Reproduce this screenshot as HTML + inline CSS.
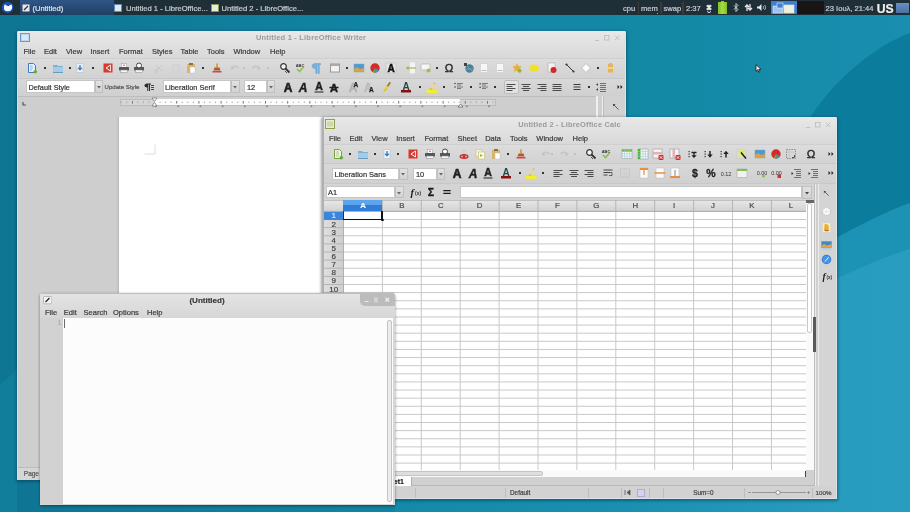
<!DOCTYPE html><html><head><meta charset="utf-8"><style>
*{box-sizing:border-box;margin:0;padding:0}
html,body{width:910px;height:512px;overflow:hidden}
body{position:relative;font-family:"Liberation Sans",sans-serif;background:#15789a}
.a{position:absolute}
.t{white-space:nowrap;-webkit-text-stroke:0.2px currentColor}
.win{position:absolute;overflow:hidden}
#root{position:absolute;left:0;top:0;width:910px;height:512px;will-change:transform;filter:blur(0.35px)}
</style></head><body><div id="root">
<svg class="a" style="left:0;top:0" width="910" height="512" viewBox="0 0 910 512">
<defs>
<linearGradient id="g1" x1="0" y1="0" x2="1" y2="0">
<stop offset="0" stop-color="#0e7593"/><stop offset="0.45" stop-color="#1285a4"/><stop offset="0.75" stop-color="#1489a6"/><stop offset="1" stop-color="#198eaf"/>
</linearGradient>
<linearGradient id="g2" gradientUnits="userSpaceOnUse" x1="395" y1="0" x2="910" y2="0">
<stop offset="0" stop-color="#138aa8"/><stop offset="0.45" stop-color="#1a90b1"/><stop offset="0.85" stop-color="#279cbe"/><stop offset="1" stop-color="#289dbf"/>
</linearGradient>
</defs>
<rect width="910" height="512" fill="url(#g1)"/>
<path d="M910 33 C885 42 857 62 831 90 C800 125 760 200 700 300 L836 238 C860 225 890 210 910 203 Z" fill="#0c7c9c"/>
<path d="M836 238 C860 225 890 210 910 203 L910 249 C880 258 860 268 836 279 Z" fill="#1c93b5"/>
<path d="M910 249 C880 258 860 268 836 279 L700 330 L395 420 L395 512 L910 512 Z" fill="url(#g2)"/>

<path d="M17 369 C12 374 6 380 0 384 L0 512 L17 512 Z" fill="#117e9c"/>
</svg>
<div id="panel" class="win" style="left:0px;top:0px;width:910px;height:15.3px;background:#1e2f38;"><svg class="a" style="left:1px;top:1px" width="14" height="14" viewBox="0 0 14 14"><circle cx="6.6" cy="6.5" r="5.8" fill="#1c4fb8"/><path d="M3 5L4 3.2 5.8 4.8 7 4.8 7.5 3.6 8.5 4.5 10.5 3.2 11 5C11.5 7 11 10 7 10.3 4 10.5 2.8 9 3 7Z" fill="#f4f8ff"/><circle cx="7.4" cy="4.2" r=".7" fill="#10204a"/></svg>
<div class="a" style="left:20px;top:0px;width:94px;height:15px;background:linear-gradient(#2e5686,#203f63);"></div>
<svg class="a" style="left:22px;top:3.5px" width="8" height="8" viewBox="0 0 8 8"><rect x=".5" y=".5" width="7" height="7" fill="#e8e8e8"/><path d="M2 6l4-4" stroke="#333" stroke-width="1.2"/></svg>
<div class="a t" style="left:32.5px;top:2.7px;height:12px;line-height:12px;font-size:7.6px;color:#dfe6ee;font-weight:normal;">(Untitled)</div>
<svg class="a" style="left:113.5px;top:3.5px" width="8" height="8" viewBox="0 0 8 8"><rect x=".5" y=".5" width="7" height="7" fill="#dfe8f4" stroke="#5a8ac8" stroke-width=".8"/></svg>
<div class="a t" style="left:126px;top:2.7px;height:12px;line-height:12px;font-size:7.6px;color:#c9ced3;font-weight:normal;">Untitled 1 - LibreOffice...</div>
<svg class="a" style="left:211px;top:3.5px" width="8" height="8" viewBox="0 0 8 8"><rect x=".5" y=".5" width="7" height="7" fill="#e9eed8" stroke="#8ca050" stroke-width=".8"/></svg>
<div class="a t" style="left:221.5px;top:2.7px;height:12px;line-height:12px;font-size:7.6px;color:#c9ced3;font-weight:normal;">Untitled 2 - LibreOffice...</div>
<div class="a t" style="left:623px;top:2.7px;height:12px;line-height:12px;font-size:7.6px;color:#c9ced3;font-weight:normal;">cpu</div>
<div class="a" style="left:637.5px;top:1.5px;width:1.5px;height:12.5px;background:#3e3a36;"></div>
<div class="a t" style="left:641px;top:2.7px;height:12px;line-height:12px;font-size:7.6px;color:#c9ced3;font-weight:normal;">mem</div>
<div class="a" style="left:660px;top:1.5px;width:1.5px;height:12.5px;background:#3e3a36;"></div>
<div class="a" style="left:656.5px;top:12.5px;width:1.5px;height:1.5px;background:#d8a040;"></div>
<div class="a t" style="left:663.5px;top:2.7px;height:12px;line-height:12px;font-size:7.6px;color:#c9ced3;font-weight:normal;">swap</div>
<div class="a" style="left:682px;top:1.5px;width:1.5px;height:12.5px;background:#3e3a36;"></div>
<div class="a t" style="left:686px;top:2.7px;height:12px;line-height:12px;font-size:7.6px;color:#c9ced3;font-weight:normal;">2:37</div>
<svg class="a" style="left:704px;top:2.5px" width="10" height="10" viewBox="0 0 10 10"><path d="M2 3l2-1.5 1 1 1-1 2 1.5-2 1.5 2 1.5-2 1.5-1-1-1 1-2-1.5 2-1.5z" fill="#e8e8e8"/><path d="M3 8.5l2 1.2 2-1.2" stroke="#ddd" fill="none"/></svg>
<div class="a" style="left:718px;top:1.5px;width:8.5px;height:12.5px;background:linear-gradient(90deg,#7ec02a,#a6dc40,#7ec02a);"></div>
<div class="a" style="left:720.5px;top:0.5px;width:3.5px;height:1.3px;background:#8cc830;"></div>
<svg class="a" style="left:732.5px;top:3px" width="6" height="9" viewBox="0 0 6 9"><path d="M1 2.5l4 4-2 2V.5l2 2-4 4" stroke="#ddd" stroke-width=".9" fill="none"/></svg>
<svg class="a" style="left:743.5px;top:3px" width="9" height="9" viewBox="0 0 9 9"><path d="M3 8V2M1 4l2-2 2 2M6 1v6M4 5l2 2 2-2" stroke="#e8e8e8" stroke-width="1.3" fill="none"/></svg>
<svg class="a" style="left:755.5px;top:3px" width="10" height="9" viewBox="0 0 10 9"><path d="M1 3.5h2l2.5-2.5v7L3 5.5H1z" fill="#e8e8e8"/><path d="M7 3c.8 1 .8 2 0 3M8.5 2c1.4 1.5 1.4 3.5 0 5" stroke="#ddd" stroke-width=".8" fill="none"/></svg>
<div class="a" style="left:771px;top:1px;width:26px;height:13px;background:#3f7fd0;"></div>
<svg class="a" style="left:771px;top:1px" width="26" height="13" viewBox="0 0 26 13"><rect x="2" y="5" width="10" height="7" fill="#9cc4f0" stroke="#e0ecf8" stroke-width=".6"/><rect x="6" y="2" width="6" height="5" fill="#3f7fd0" stroke="#e0ecf8" stroke-width=".6"/><rect x="13" y="4" width="10" height="8" fill="#eef0d8" stroke="#d8e0f0" stroke-width=".6"/></svg>
<div class="a" style="left:797px;top:1px;width:27px;height:13px;background:#1a1515;"></div>
<div class="a t" style="left:825.5px;top:2.7px;height:12px;line-height:12px;font-size:7.6px;color:#c9ced3;font-weight:normal;">23 Ιουλ, 21:44</div>
<div class="a t" style="left:876.8px;top:2.6px;height:12px;line-height:12px;font-size:12.2px;color:#f0f0f0;font-weight:bold;">US</div>
<div class="a" style="left:896px;top:3px;width:13px;height:10px;background:linear-gradient(#6a90c0,#4a70a8);"></div></div>
<div id="writer" class="win" style="left:17px;top:31px;width:609px;height:449px;background:#cdcdcd;box-shadow:0 1px 3px 1px rgba(0,30,50,.35);border-radius:2px 2px 0 0;"><div class="a" style="left:0px;top:0px;width:609px;height:27px;background:linear-gradient(#e8e8e8,#d9d9d9);"></div>
<div class="a" style="left:0px;top:27px;width:609px;height:19.5px;background:linear-gradient(#dcdcdc,#d2d2d2);border-top:1px solid #cfcfcf;"></div>
<div class="a" style="left:0px;top:46.5px;width:609px;height:18.8px;background:linear-gradient(#d8d8d8,#d0d0d0);border-top:1px solid #c8c8c8;"></div>
<div class="a" style="left:0px;top:65.3px;width:609px;height:370.7px;background:#cecece;border-top:1px solid #bdbdbd;"></div>
<div class="a" style="left:0px;top:436px;width:609px;height:13px;background:#d6d6d6;border-top:1px solid #bcbcbc;"></div>
<svg class="a" style="left:3px;top:2px" width="10" height="9" viewBox="0 0 10 9"><rect x=".5" y=".5" width="9" height="8" fill="#bcd6f0" stroke="#6a9ad0" stroke-width="1"/><rect x="2" y="2" width="6" height="5" fill="#dbe9f7"/></svg>
<div class="a t" style="left:194px;width:200px;text-align:center;top:0.8px;height:12px;line-height:12px;font-size:7.5px;color:#9a9a9a;font-weight:bold;-webkit-text-stroke:0;letter-spacing:.2px;">Untitled 1 - LibreOffice Writer</div>
<svg class="a" style="left:576px;top:3px" width="30" height="8" viewBox="0 0 30 8"><path d="M2 6.5h4" stroke="#c2c2c2" stroke-width="1"/><rect x="11.5" y="1.5" width="4.5" height="4.5" fill="none" stroke="#c2c2c2" stroke-width="1"/><path d="M22 1.5l4.5 4.5M26.5 1.5L22 6" stroke="#c2c2c2" stroke-width="1"/></svg>
<div class="a t" style="left:6.5px;top:14.8px;height:12px;line-height:12px;font-size:7.5px;color:#3c3c3c;font-weight:normal;">File</div>
<div class="a t" style="left:27px;top:14.8px;height:12px;line-height:12px;font-size:7.5px;color:#3c3c3c;font-weight:normal;">Edit</div>
<div class="a t" style="left:49px;top:14.8px;height:12px;line-height:12px;font-size:7.5px;color:#3c3c3c;font-weight:normal;">View</div>
<div class="a t" style="left:73.5px;top:14.8px;height:12px;line-height:12px;font-size:7.5px;color:#3c3c3c;font-weight:normal;">Insert</div>
<div class="a t" style="left:102px;top:14.8px;height:12px;line-height:12px;font-size:7.5px;color:#3c3c3c;font-weight:normal;">Format</div>
<div class="a t" style="left:135px;top:14.8px;height:12px;line-height:12px;font-size:7.5px;color:#3c3c3c;font-weight:normal;">Styles</div>
<div class="a t" style="left:163.5px;top:14.8px;height:12px;line-height:12px;font-size:7.5px;color:#3c3c3c;font-weight:normal;">Table</div>
<div class="a t" style="left:190px;top:14.8px;height:12px;line-height:12px;font-size:7.5px;color:#3c3c3c;font-weight:normal;">Tools</div>
<div class="a t" style="left:216.5px;top:14.8px;height:12px;line-height:12px;font-size:7.5px;color:#3c3c3c;font-weight:normal;">Window</div>
<div class="a t" style="left:253px;top:14.8px;height:12px;line-height:12px;font-size:7.5px;color:#3c3c3c;font-weight:normal;">Help</div>
<svg class="a" style="left:9px;top:31px" width="12" height="12" viewBox="0 0 12 12"><path d="M2.5 1.5h5l2 2v7h-7z" fill="#e8f1fa" stroke="#3d7cc0" stroke-width="1"/><path d="M4 4h2.5M4 6h3M4 8h2" stroke="#7aa6d6" stroke-width=".8"/><circle cx="9.3" cy="9.8" r="1.8" fill="#5fae3a"/></svg>
<svg class="a" style="left:34.5px;top:31px" width="12" height="12" viewBox="0 0 12 12"><path d="M1 3h4l1 1h5v6.5H1z" fill="#7fb0d6"/><path d="M1 5h10v5.5H1z" fill="#a6cbe8"/><path d="M1 10.5h10" stroke="#5a8fb8" stroke-width=".8"/></svg>
<svg class="a" style="left:57.4px;top:31px" width="12" height="12" viewBox="0 0 12 12"><path d="M3 1.5h6v9H3z" fill="#f4f6f8" stroke="#b8c4d0" stroke-width=".7"/><path d="M6 3v4.5M4.2 5.8L6 7.8l1.8-2" stroke="#3a7cc4" stroke-width="1.4" fill="none"/></svg>
<svg class="a" style="left:85.2px;top:31px" width="12" height="12" viewBox="0 0 12 12"><rect x="1.5" y="1.5" width="9" height="9" fill="#d8382e"/><path d="M8.5 3L4 6l4.5 3" stroke="#fff" stroke-width="1" fill="none"/><path d="M8.5 3v6" stroke="#fff" stroke-width=".8"/></svg>
<svg class="a" style="left:101px;top:31px" width="12" height="12" viewBox="0 0 12 12"><rect x="3.5" y="1.5" width="5" height="4" fill="#fff" stroke="#999" stroke-width=".5"/><rect x="1" y="5" width="10" height="3.5" rx=".5" fill="#555"/><rect x="2.5" y="8" width="7" height="2.5" fill="#f4f4f4" stroke="#888" stroke-width=".5"/><circle cx="6" cy="3.2" r=".8" fill="#d33"/></svg>
<svg class="a" style="left:115.5px;top:31px" width="12" height="12" viewBox="0 0 12 12"><rect x="1" y="5" width="10" height="3.5" rx=".5" fill="#555"/><rect x="2.5" y="8" width="7" height="2.5" fill="#f4f4f4" stroke="#888" stroke-width=".5"/><circle cx="6" cy="3.5" r="2.5" fill="#fff" stroke="#444" stroke-width="1"/></svg>
<svg class="a" style="left:136px;top:31px" width="12" height="12" viewBox="0 0 12 12"><path d="M3 9l6-6M9 9L3 3" stroke="#c8c8c8" stroke-width="1"/><circle cx="3" cy="9" r="1.5" fill="none" stroke="#c8c8c8"/></svg>
<svg class="a" style="left:151.7px;top:31px" width="12" height="12" viewBox="0 0 12 12"><rect x="4" y="3" width="6" height="7" fill="#d6d6d6" stroke="#cacaca" stroke-width=".6"/></svg>
<svg class="a" style="left:167.5px;top:31px" width="12" height="12" viewBox="0 0 12 12"><rect x="2" y="2" width="8" height="9" rx=".5" fill="#d9b46a"/><rect x="4" y="1" width="4" height="2" fill="#8c6f3a"/><rect x="5" y="5" width="5" height="6" fill="#fff" stroke="#bbb" stroke-width=".5"/></svg>
<svg class="a" style="left:194px;top:31px" width="12" height="12" viewBox="0 0 12 12"><path d="M5 1.5h2v4H5z" fill="#d9a050"/><path d="M3.5 5.5h5l1 3h-7z" fill="#b55a30"/><path d="M1.5 9h9v1.5h-9z" fill="#d64545"/></svg>
<svg class="a" style="left:211.5px;top:31px" width="12" height="12" viewBox="0 0 12 12"><path d="M2.5 7 C3.5 4 7 3 9.5 6" stroke="#c4c4c4" stroke-width="1.5" fill="none"/><path d="M1.5 4.5l1.2 3.5 3-1.5" fill="#c4c4c4"/></svg>
<svg class="a" style="left:233px;top:31px" width="12" height="12" viewBox="0 0 12 12"><path d="M9.5 7 C8.5 4 5 3 2.5 6" stroke="#c4c4c4" stroke-width="1.5" fill="none"/><path d="M10.5 4.5l-1.2 3.5-3-1.5" fill="#c4c4c4"/></svg>
<svg class="a" style="left:262.3px;top:31px" width="12" height="12" viewBox="0 0 12 12"><circle cx="4.5" cy="4.5" r="2.8" fill="#f4f4f4" stroke="#333" stroke-width="1.2"/><path d="M6.5 6.5l4 4" stroke="#333" stroke-width="1.8"/><path d="M6 9l2 2" stroke="#555" stroke-width="1"/></svg>
<svg class="a" style="left:276.8px;top:31px" width="12" height="12" viewBox="0 0 12 12"><text x="6" y="4.5" font-size="4" font-family="Liberation Sans" font-weight="bold" text-anchor="middle" fill="#333">ABC</text><path d="M3 7l2.5 2.5L9.5 5" stroke="#8cc04a" stroke-width="1.6" fill="none"/></svg>
<svg class="a" style="left:292.5px;top:31px" width="12" height="12" viewBox="0 0 12 12"><path d="M5 1.5h5.5v1.3H9.3v8.7H8V2.8H7v8.7H5.8V6.8C3.5 6.8 2 5.6 2 4.1S3.5 1.5 5 1.5z" fill="#78b0e0" stroke="#5a94c8" stroke-width=".4"/></svg>
<svg class="a" style="left:311.8px;top:31px" width="12" height="12" viewBox="0 0 12 12"><rect x="1.5" y="2" width="9" height="8" fill="#f2f2f2" stroke="#888" stroke-width=".8"/><rect x="1.5" y="2" width="9" height="2" fill="#aaa"/></svg>
<svg class="a" style="left:336px;top:31px" width="12" height="12" viewBox="0 0 12 12"><rect x="1" y="2" width="10" height="8" fill="#4a9ad8"/><path d="M1 7l3-2 3 2 4-1v4H1z" fill="#e0a040"/><rect x="1" y="2" width="10" height="8" fill="none" stroke="#8aa" stroke-width=".5"/></svg>
<svg class="a" style="left:351.7px;top:31px" width="12" height="12" viewBox="0 0 12 12"><circle cx="6" cy="6" r="4.7" fill="#d92828"/><path d="M6 6l4.2 2.2A4.7 4.7 0 0 1 7 10.6z" fill="#3c8fd0"/><path d="M6 6l1 4.6A4.7 4.7 0 0 1 3.5 10z" fill="#5ab046"/></svg>
<svg class="a" style="left:367.5px;top:31px" width="12" height="12" viewBox="0 0 12 12"><rect x="1" y="1" width="10" height="10" fill="#e4e4e4" stroke="#c0c0c0" stroke-width=".6"/><text x="6" y="10" font-size="10" font-family="Liberation Sans" font-weight="bold" text-anchor="middle" fill="#111" stroke="#111" stroke-width=".5">A</text></svg>
<svg class="a" style="left:388px;top:31px" width="12" height="12" viewBox="0 0 12 12"><rect x="5" y="0.5" width="5" height="11" fill="#f4f4f4"/><path d="M1 6h10" stroke="#b8c070" stroke-width="1.5"/><path d="M1.5 6l2-1.8v3.6z" fill="#8cb040"/></svg>
<svg class="a" style="left:402.8px;top:31px" width="12" height="12" viewBox="0 0 12 12"><rect x="1" y="2" width="9" height="6" rx="1" fill="#f6f6f6" stroke="#aaa" stroke-width=".6"/><circle cx="8.5" cy="8.5" r="2" fill="#9cc050"/></svg>
<svg class="a" style="left:425.8px;top:31px" width="12" height="12" viewBox="0 0 12 12"><text x="6" y="10.3" font-size="11.5" font-family="Liberation Sans" text-anchor="middle" fill="#222" stroke="#222" stroke-width=".35">&#937;</text></svg>
<svg class="a" style="left:445.5px;top:31px" width="12" height="12" viewBox="0 0 12 12"><circle cx="6.5" cy="6.5" r="4.2" fill="#4a7f95"/><path d="M4 4l5 5M3 7h7" stroke="#7fb0c4" stroke-width=".7"/><rect x="1" y="1" width="3" height="3" fill="#444"/></svg>
<svg class="a" style="left:460.5px;top:31px" width="12" height="12" viewBox="0 0 12 12"><rect x="2.5" y="1.5" width="7" height="9" fill="#f6f6f6" stroke="#ccc" stroke-width=".6"/><path d="M3.5 8.5h5" stroke="#999" stroke-width=".6"/></svg>
<svg class="a" style="left:476.6px;top:31px" width="12" height="12" viewBox="0 0 12 12"><rect x="2.5" y="1.5" width="7" height="9" fill="#f6f6f6" stroke="#ccc" stroke-width=".6"/><path d="M3.5 8.5h5" stroke="#999" stroke-width=".6"/></svg>
<svg class="a" style="left:494px;top:31px" width="12" height="12" viewBox="0 0 12 12"><path d="M6 1l1.5 3 3.3.4-2.4 2.3.6 3.3L6 8.4 3 10l.6-3.3L1.2 4.4l3.3-.4z" fill="#e8b040"/><circle cx="8.5" cy="8.8" r="2" fill="#8cb830"/></svg>
<svg class="a" style="left:511px;top:31px" width="12" height="12" viewBox="0 0 12 12"><ellipse cx="6" cy="6" rx="5" ry="3.5" fill="#f0e028"/></svg>
<svg class="a" style="left:528.5px;top:31px" width="12" height="12" viewBox="0 0 12 12"><rect x="2" y="1" width="7" height="9" fill="#f2f2f2" stroke="#c4a0a0" stroke-width=".6"/><circle cx="7.5" cy="8" r="3" fill="#d02828"/></svg>
<svg class="a" style="left:547px;top:31px" width="12" height="12" viewBox="0 0 12 12"><path d="M2.5 2.5l7 7" stroke="#333" stroke-width="1"/><circle cx="2.5" cy="2.5" r="1.1" fill="#333"/><circle cx="9.5" cy="9.5" r="1.1" fill="#333"/></svg>
<svg class="a" style="left:563px;top:31px" width="12" height="12" viewBox="0 0 12 12"><path d="M6 1.5L10.5 6 6 10.5 1.5 6z" fill="#fafafa" stroke="#b8b8b8" stroke-width=".8"/></svg>
<svg class="a" style="left:587.4px;top:31px" width="12" height="12" viewBox="0 0 12 12"><rect x="4" y="2" width="5" height="8.5" fill="#e8b450"/><rect x="5" y="1" width="3" height="2" fill="#bbb"/><path d="M4 6h5" stroke="#fff" stroke-width=".8"/></svg>
<div class="a" style="left:27.4px;top:36px;width:2px;height:2px;background:#333;"></div>
<div class="a" style="left:51.6px;top:36px;width:2px;height:2px;background:#333;"></div>
<div class="a" style="left:74.5px;top:36px;width:2px;height:2px;background:#333;"></div>
<div class="a" style="left:184.5px;top:36px;width:2px;height:2px;background:#333;"></div>
<div class="a" style="left:329px;top:36px;width:2px;height:2px;background:#333;"></div>
<div class="a" style="left:419.3px;top:36px;width:2px;height:2px;background:#333;"></div>
<div class="a" style="left:579.7px;top:36px;width:2px;height:2px;background:#333;"></div>
<div class="a" style="left:226px;top:36px;width:2px;height:2px;background:#c0c0c0;"></div>
<div class="a" style="left:250px;top:36px;width:2px;height:2px;background:#c0c0c0;"></div>
<div class="a" style="left:8.7px;top:49.2px;width:69.3px;height:12.8px;background:#fff;border:1px solid #c6c6c6;"></div>
<div class="a t" style="left:11.5px;top:51px;height:12px;line-height:12px;font-size:7.3px;color:#333;font-weight:normal;">Default Style</div>
<div class="a" style="left:78px;top:49.2px;width:7.5px;height:12.8px;background:linear-gradient(#e2e2e2,#d2d2d2);border:1px solid #c0c0c0;"></div>
<div class="a t" style="left:87.5px;top:50.3px;height:12px;line-height:12px;font-size:6.1px;color:#555;font-weight:normal;">Update Style</div>
<svg class="a" style="left:126.3px;top:50px" width="12" height="12" viewBox="0 0 12 12"><path d="M4 2.5h4v1H7v6.5H6V3.5H5.3V10h-1V6.5C2.5 6.5 1.5 5.5 1.5 4.5S2.5 2.5 4 2.5z" fill="#2a2a2a"/><path d="M8 4.5h3M8 6.5h3M8 8.5h3" stroke="#444" stroke-width="1"/></svg>
<div class="a" style="left:145.5px;top:49.2px;width:68.5px;height:12.8px;background:#fff;border:1px solid #c6c6c6;"></div>
<div class="a t" style="left:148px;top:51px;height:12px;line-height:12px;font-size:7.4px;color:#333;font-weight:normal;">Liberation Serif</div>
<div class="a" style="left:214px;top:49.2px;width:8.5px;height:12.8px;background:linear-gradient(#e2e2e2,#d2d2d2);border:1px solid #c0c0c0;"></div>
<div class="a" style="left:227px;top:49.2px;width:23px;height:12.8px;background:#fff;border:1px solid #c6c6c6;"></div>
<div class="a t" style="left:230px;top:51px;height:12px;line-height:12px;font-size:7.4px;color:#333;font-weight:normal;">12</div>
<div class="a" style="left:250px;top:49.2px;width:7.5px;height:12.8px;background:linear-gradient(#e2e2e2,#d2d2d2);border:1px solid #c0c0c0;"></div>
<svg class="a" style="left:79.8px;top:55px" width="4" height="3" viewBox="0 0 4 3"><path d="M0 0h4L2 2.5z" fill="#666"/></svg>
<svg class="a" style="left:216.3px;top:55px" width="4" height="3" viewBox="0 0 4 3"><path d="M0 0h4L2 2.5z" fill="#666"/></svg>
<svg class="a" style="left:251.8px;top:55px" width="4" height="3" viewBox="0 0 4 3"><path d="M0 0h4L2 2.5z" fill="#666"/></svg>
<svg class="a" style="left:264.7px;top:50px" width="12" height="12" viewBox="0 0 12 12"><text x="6" y="10.6" font-size="12" font-family="Liberation Sans" font-weight="bold" text-anchor="middle" fill="#1e1e1e" stroke="#1e1e1e" stroke-width=".6">A</text></svg>
<svg class="a" style="left:280.4px;top:50px" width="12" height="12" viewBox="0 0 12 12"><text x="6" y="10.6" font-size="12" font-family="Liberation Sans" font-weight="bold" font-style="italic" text-anchor="middle" fill="#1e1e1e" stroke="#1e1e1e" stroke-width=".4">A</text></svg>
<svg class="a" style="left:296px;top:50px" width="12" height="12" viewBox="0 0 12 12"><text x="6" y="9.4" font-size="10.5" font-family="Liberation Sans" font-weight="bold" text-anchor="middle" fill="#1e1e1e" stroke="#1e1e1e" stroke-width=".4">A</text><path d="M1.5 11h9" stroke="#1e1e1e" stroke-width="1.2"/></svg>
<svg class="a" style="left:310.6px;top:50px" width="12" height="12" viewBox="0 0 12 12"><text x="6" y="10.6" font-size="11" font-family="Liberation Sans" font-weight="bold" text-anchor="middle" fill="#1e1e1e" stroke="#1e1e1e" stroke-width=".5">A</text><path d="M1.5 6.5h9" stroke="#1e1e1e" stroke-width="1.6"/></svg>
<svg class="a" style="left:331.2px;top:50px" width="12" height="12" viewBox="0 0 12 12"><text x="5" y="10.8" font-size="12" font-family="Liberation Sans" font-weight="bold" text-anchor="middle" fill="#b4b4b4" stroke="#b0b0b0" stroke-width=".4">A</text><text x="7.8" y="6.3" font-size="6.5" font-family="Liberation Sans" font-weight="bold" text-anchor="middle" fill="#1e1e1e" stroke="#1e1e1e" stroke-width=".25">A</text></svg>
<svg class="a" style="left:345.7px;top:50px" width="12" height="12" viewBox="0 0 12 12"><text x="5" y="10.8" font-size="12" font-family="Liberation Sans" font-weight="bold" text-anchor="middle" fill="#bdbdbd" stroke="#b8b8b8" stroke-width=".4">A</text><text x="8.3" y="11.2" font-size="6.5" font-family="Liberation Sans" font-weight="bold" text-anchor="middle" fill="#1e1e1e" stroke="#1e1e1e" stroke-width=".25">A</text></svg>
<svg class="a" style="left:363.8px;top:50px" width="12" height="12" viewBox="0 0 12 12"><path d="M8.5 .8l1.5 1-3 4.5-1.5-1z" fill="#a07830"/><path d="M5.5 4.5l2.5 1.8-1.5 2.2C5.5 10 3.5 11 2 11 2.5 9.5 3 7.5 5.5 4.5z" fill="#e8d050"/><path d="M3 10.5l2.5-3" stroke="#c8a830" stroke-width=".6"/></svg>
<svg class="a" style="left:383.2px;top:50px" width="12" height="12" viewBox="0 0 12 12"><text x="6" y="9" font-size="10" font-family="Liberation Sans" font-weight="bold" text-anchor="middle" fill="#1a4a4a">A</text><rect x="1" y="9" width="10" height="2.5" fill="#8a1010"/></svg>
<svg class="a" style="left:408.5px;top:50px" width="12" height="12" viewBox="0 0 12 12"><path d="M8 1l2.2 1.5-3.5 5.5-2.5-1.5z" fill="#e8d890"/><path d="M8.2 1.3l1.5 1-.8 1.3-1.5-1z" fill="#f0a0b0"/><path d="M4.2 6.5l2.5 1.5-1.2 1.5-2-1z" fill="#d8c060"/><rect x=".5" y="9" width="11" height="2.8" fill="#f4f020"/></svg>
<svg class="a" style="left:436.2px;top:50px" width="12" height="12" viewBox="0 0 12 12"><g fill="#444"><circle cx="2" cy="2.5" r=".8"/><circle cx="2" cy="6" r=".8"/></g><path d="M4 2.5h6M4 4h4M4 6h6M4 7.5h4" stroke="#666" stroke-width=".8"/></svg>
<svg class="a" style="left:460.5px;top:50px" width="12" height="12" viewBox="0 0 12 12"><g fill="#444"><rect x="1.5" y="2" width="1.2" height="1.6"/><rect x="1.5" y="5.5" width="1.2" height="1.6"/></g><path d="M4 2.5h6M4 4h4M4 6h6M4 7.5h4" stroke="#666" stroke-width=".8"/></svg>
<svg class="a" style="left:503px;top:50px" width="12" height="12" viewBox="0 0 12 12"><path d="M1.5 3.5h9M3 5.5h6M1.5 7.5h9M3 9.5h6" stroke="#4a4a4a" stroke-width="1"/></svg>
<svg class="a" style="left:519.3px;top:50px" width="12" height="12" viewBox="0 0 12 12"><path d="M1.5 3.5h9M4.5 5.5h6M1.5 7.5h9M4.5 9.5h6" stroke="#4a4a4a" stroke-width="1"/></svg>
<svg class="a" style="left:534.3px;top:50px" width="12" height="12" viewBox="0 0 12 12"><path d="M1.5 3.5h9M1.5 5.5h9M1.5 7.5h9M1.5 9.5h9" stroke="#4a4a4a" stroke-width="1"/></svg>
<svg class="a" style="left:554px;top:50px" width="12" height="12" viewBox="0 0 12 12"><path d="M2.5 3.5h7M2.5 6h7M2.5 8.5h7" stroke="#3a3a3a" stroke-width="1"/></svg>
<svg class="a" style="left:578px;top:50px" width="12" height="12" viewBox="0 0 12 12"><path d="M5 2.5h6M5 4.5h6M5 6.5h6M5 8.5h6M5 10.5h6" stroke="#555" stroke-width=".8" fill="none"/><path d="M1 3.5l2 -1.2v2.4zM1 8.5l2 -1.2v2.4z" fill="#333"/></svg>
<svg class="a" style="left:596.6px;top:50px" width="12" height="12" viewBox="0 0 12 12"><path d="M3.5 4l2 2-2 2zM6.5 4l2 2-2 2z" fill="#222"/></svg>
<div class="a" style="left:487px;top:49px;width:14.5px;height:14px;background:#e2e2e2;border:1px solid #bdbdbd;border-radius:2px;"></div>
<svg class="a" style="left:488.2px;top:50px" width="12" height="12" viewBox="0 0 12 12"><path d="M1.5 3.5h9M1.5 5.5h6M1.5 7.5h9M1.5 9.5h6" stroke="#4a4a4a" stroke-width="1"/></svg>
<div class="a" style="left:401.5px;top:55px;width:2px;height:2px;background:#333;"></div>
<div class="a" style="left:426.2px;top:55px;width:2px;height:2px;background:#333;"></div>
<div class="a" style="left:452.8px;top:55px;width:2px;height:2px;background:#333;"></div>
<div class="a" style="left:477px;top:55px;width:2px;height:2px;background:#333;"></div>
<div class="a" style="left:570.5px;top:55px;width:2px;height:2px;background:#333;"></div>
<svg class="a" style="left:4.5px;top:69.5px" width="5" height="5" viewBox="0 0 5 5"><path d="M1 1v3h3" stroke="#555" stroke-width="1.2" fill="none"/></svg>
<div class="a" style="left:102.5px;top:67.8px;width:376.5px;height:7px;background:#d6d6d6;border:1px solid #bcbcbc;"></div>
<div class="a" style="left:137px;top:68.3px;width:306px;height:6px;background:#fcfcfc;"></div>
<svg class="a" style="left:102.5px;top:67.8px" width="377" height="7" viewBox="0 0 377 7"><path d="M40.05 2.6v1.4" stroke="#888" stroke-width=".7"/><path d="M45.6 2.6v1.4" stroke="#888" stroke-width=".7"/><path d="M51.15 2.6v1.4" stroke="#888" stroke-width=".7"/><path d="M56.7 2v2.6" stroke="#666" stroke-width=".9"/><path d="M62.25 2.6v1.4" stroke="#888" stroke-width=".7"/><path d="M67.8 2.6v1.4" stroke="#888" stroke-width=".7"/><path d="M73.35 2.6v1.4" stroke="#888" stroke-width=".7"/><path d="M78.9 2v2.6" stroke="#666" stroke-width=".9"/><path d="M84.45 2.6v1.4" stroke="#888" stroke-width=".7"/><path d="M90 2.6v1.4" stroke="#888" stroke-width=".7"/><path d="M95.55 2.6v1.4" stroke="#888" stroke-width=".7"/><path d="M101.1 2v2.6" stroke="#666" stroke-width=".9"/><path d="M106.65 2.6v1.4" stroke="#888" stroke-width=".7"/><path d="M112.2 2.6v1.4" stroke="#888" stroke-width=".7"/><path d="M117.75 2.6v1.4" stroke="#888" stroke-width=".7"/><path d="M123.3 2v2.6" stroke="#666" stroke-width=".9"/><path d="M128.85 2.6v1.4" stroke="#888" stroke-width=".7"/><path d="M134.4 2.6v1.4" stroke="#888" stroke-width=".7"/><path d="M139.95 2.6v1.4" stroke="#888" stroke-width=".7"/><path d="M145.5 2v2.6" stroke="#666" stroke-width=".9"/><path d="M151.05 2.6v1.4" stroke="#888" stroke-width=".7"/><path d="M156.6 2.6v1.4" stroke="#888" stroke-width=".7"/><path d="M162.15 2.6v1.4" stroke="#888" stroke-width=".7"/><path d="M167.7 2v2.6" stroke="#666" stroke-width=".9"/><path d="M173.25 2.6v1.4" stroke="#888" stroke-width=".7"/><path d="M178.8 2.6v1.4" stroke="#888" stroke-width=".7"/><path d="M184.35 2.6v1.4" stroke="#888" stroke-width=".7"/><path d="M189.9 2v2.6" stroke="#666" stroke-width=".9"/><path d="M195.45 2.6v1.4" stroke="#888" stroke-width=".7"/><path d="M201 2.6v1.4" stroke="#888" stroke-width=".7"/><path d="M206.55 2.6v1.4" stroke="#888" stroke-width=".7"/><path d="M212.1 2v2.6" stroke="#666" stroke-width=".9"/><path d="M217.65 2.6v1.4" stroke="#888" stroke-width=".7"/><path d="M223.2 2.6v1.4" stroke="#888" stroke-width=".7"/><path d="M228.75 2.6v1.4" stroke="#888" stroke-width=".7"/><path d="M234.3 2v2.6" stroke="#666" stroke-width=".9"/><path d="M239.85 2.6v1.4" stroke="#888" stroke-width=".7"/><path d="M245.4 2.6v1.4" stroke="#888" stroke-width=".7"/><path d="M250.95 2.6v1.4" stroke="#888" stroke-width=".7"/><path d="M256.5 2v2.6" stroke="#666" stroke-width=".9"/><path d="M262.05 2.6v1.4" stroke="#888" stroke-width=".7"/><path d="M267.6 2.6v1.4" stroke="#888" stroke-width=".7"/><path d="M273.15 2.6v1.4" stroke="#888" stroke-width=".7"/><path d="M278.7 2v2.6" stroke="#666" stroke-width=".9"/><path d="M284.25 2.6v1.4" stroke="#888" stroke-width=".7"/><path d="M289.8 2.6v1.4" stroke="#888" stroke-width=".7"/><path d="M295.35 2.6v1.4" stroke="#888" stroke-width=".7"/><path d="M300.9 2v2.6" stroke="#666" stroke-width=".9"/><path d="M306.45 2.6v1.4" stroke="#888" stroke-width=".7"/><path d="M312 2.6v1.4" stroke="#888" stroke-width=".7"/><path d="M317.55 2.6v1.4" stroke="#888" stroke-width=".7"/><path d="M323.1 2v2.6" stroke="#666" stroke-width=".9"/><path d="M328.65 2.6v1.4" stroke="#888" stroke-width=".7"/><path d="M334.2 2.6v1.4" stroke="#888" stroke-width=".7"/><path d="M339.75 2.6v1.4" stroke="#888" stroke-width=".7"/><path d="M345.3 2v2.6" stroke="#666" stroke-width=".9"/><path d="M350.85 2.6v1.4" stroke="#888" stroke-width=".7"/><path d="M356.4 2.6v1.4" stroke="#888" stroke-width=".7"/><path d="M361.95 2.6v1.4" stroke="#888" stroke-width=".7"/><path d="M367.5 2v2.6" stroke="#666" stroke-width=".9"/><path d="M373.05 2.6v1.4" stroke="#888" stroke-width=".7"/><path d="M28.95 2.4v1.8" stroke="#999" stroke-width=".7"/><path d="M23.4 2.4v1.8" stroke="#999" stroke-width=".7"/><path d="M17.85 2.4v1.8" stroke="#999" stroke-width=".7"/><path d="M12.3 2.4v1.8" stroke="#999" stroke-width=".7"/><path d="M6.75 2.4v1.8" stroke="#999" stroke-width=".7"/><path d="M1.2 2.4v1.8" stroke="#999" stroke-width=".7"/><path d="M12.5 2v2.6" stroke="#777" stroke-width=".9"/></svg>
<svg class="a" style="left:102.5px;top:74px" width="377" height="3" viewBox="0 0 377 3"><path d="M36 0v1.6M35 1.6h2" stroke="#777" stroke-width=".7"/><path d="M58.2 0v1.6M57.2 1.6h2" stroke="#777" stroke-width=".7"/><path d="M80.4 0v1.6M79.4 1.6h2" stroke="#777" stroke-width=".7"/><path d="M102.6 0v1.6M101.6 1.6h2" stroke="#777" stroke-width=".7"/><path d="M124.8 0v1.6M123.8 1.6h2" stroke="#777" stroke-width=".7"/><path d="M147 0v1.6M146 1.6h2" stroke="#777" stroke-width=".7"/><path d="M169.2 0v1.6M168.2 1.6h2" stroke="#777" stroke-width=".7"/><path d="M191.4 0v1.6M190.4 1.6h2" stroke="#777" stroke-width=".7"/><path d="M213.6 0v1.6M212.6 1.6h2" stroke="#777" stroke-width=".7"/><path d="M235.8 0v1.6M234.8 1.6h2" stroke="#777" stroke-width=".7"/><path d="M258 0v1.6M257 1.6h2" stroke="#777" stroke-width=".7"/><path d="M280.2 0v1.6M279.2 1.6h2" stroke="#777" stroke-width=".7"/><path d="M302.4 0v1.6M301.4 1.6h2" stroke="#777" stroke-width=".7"/><path d="M324.6 0v1.6M323.6 1.6h2" stroke="#777" stroke-width=".7"/><path d="M346.8 0v1.6M345.8 1.6h2" stroke="#777" stroke-width=".7"/><path d="M369 0v1.6M368 1.6h2" stroke="#777" stroke-width=".7"/></svg>
<svg class="a" style="left:133.5px;top:66.3px" width="7" height="10" viewBox="0 0 7 10"><path d="M1 1h5L3.5 4.5zM1 9h5L3.5 5.5z" fill="#fff" stroke="#777" stroke-width=".8"/></svg>
<svg class="a" style="left:439.5px;top:71.5px" width="7" height="5" viewBox="0 0 7 5"><path d="M1 4h5L3.5 1z" fill="#fff" stroke="#666" stroke-width=".8"/></svg>
<div class="a" style="left:579px;top:65px;width:1.5px;height:371px;background:#f0f0f0;"></div>
<div class="a" style="left:580.5px;top:65px;width:4px;height:371px;background:#cfcfcf;"></div>
<div class="a" style="left:584.5px;top:65px;width:1px;height:371px;background:#f0f0f0;"></div>
<div class="a" style="left:585.5px;top:65px;width:1px;height:371px;background:#bcbcbc;"></div>
<div class="a" style="left:586.5px;top:65px;width:22.5px;height:371px;background:#d2d2d2;"></div>
<svg class="a" style="left:594px;top:71px" width="10" height="10" viewBox="0 0 12 12"><path d="M3 3l6 6" stroke="#444" stroke-width="1"/><path d="M2.5 2.5h3l-3 3z" fill="#444"/></svg>
<div class="a" style="left:101.5px;top:85.8px;width:441.5px;height:363.2px;background:#fff;"></div>
<div class="a" style="left:98.5px;top:85.8px;width:3px;height:350.2px;background:linear-gradient(90deg,#cecece,#bcbcbc);"></div>
<svg class="a" style="left:126.5px;top:112.5px" width="12" height="11" viewBox="0 0 12 11"><path d="M.5 10h10.5V.5" stroke="#dcdcdc" stroke-width="1" fill="none"/></svg>
<div class="a" style="left:0px;top:436px;width:609px;height:13px;background:#d6d6d6;border-top:1px solid #bcbcbc;"></div>
<div class="a t" style="left:6.8px;top:436.5px;height:12px;line-height:12px;font-size:6.5px;color:#555;font-weight:normal;">Page 1 of 1</div>
<div class="a" style="left:0px;top:0px;width:1.2px;height:449px;background:#d8e0e6;"></div>
<div class="a" style="left:607.8px;top:0px;width:1.2px;height:449px;background:#dfe3e6;"></div></div>
<div id="calc" class="win" style="left:322px;top:117px;width:514.6px;height:381.6px;background:#d3d3d3;box-shadow:0 1px 3px 1px rgba(0,30,50,.4);border-radius:2px 2px 0 0;"><div class="a" style="left:0px;top:0px;width:514.6px;height:26.5px;background:linear-gradient(#e8e8e8,#d9d9d9);"></div>
<div class="a" style="left:0px;top:26.5px;width:514.6px;height:19.5px;background:linear-gradient(#dcdcdc,#d2d2d2);border-top:1px solid #cfcfcf;"></div>
<div class="a" style="left:0px;top:46px;width:514.6px;height:20.3px;background:linear-gradient(#d8d8d8,#d0d0d0);border-top:1px solid #c8c8c8;"></div>
<div class="a" style="left:0px;top:66.3px;width:514.6px;height:16.7px;background:#d4d4d4;border-top:1px solid #c8c8c8;"></div>
<div class="a" style="left:0px;top:0px;width:1.5px;height:382px;background:#b0b0b0;"></div>
<svg class="a" style="left:3.3px;top:2.3px" width="10" height="10" viewBox="0 0 10 10"><rect x=".5" y=".5" width="9" height="9" fill="#e6ecd0" stroke="#8ca050" stroke-width="1"/><path d="M3 2.5v5M5 2.5v5M7 2.5v5" stroke="#a8b878" stroke-width=".8"/></svg>
<div class="a t" style="left:147.5px;width:200px;text-align:center;top:1.9px;height:12px;line-height:12px;font-size:7.4px;color:#9a9a9a;font-weight:bold;-webkit-text-stroke:0;letter-spacing:.2px;">Untitled 2 - LibreOffice Calc</div>
<svg class="a" style="left:482px;top:3.5px" width="30" height="8" viewBox="0 0 30 8"><path d="M2 6.5h4" stroke="#c2c2c2" stroke-width="1"/><rect x="11.5" y="1.5" width="4.5" height="4.5" fill="none" stroke="#c2c2c2" stroke-width="1"/><path d="M22 1.5l4.5 4.5M26.5 1.5L22 6" stroke="#c2c2c2" stroke-width="1"/></svg>
<div class="a t" style="left:6.9px;top:16px;height:12px;line-height:12px;font-size:7.5px;color:#3c3c3c;font-weight:normal;">File</div>
<div class="a t" style="left:27.4px;top:16px;height:12px;line-height:12px;font-size:7.5px;color:#3c3c3c;font-weight:normal;">Edit</div>
<div class="a t" style="left:49.5px;top:16px;height:12px;line-height:12px;font-size:7.5px;color:#3c3c3c;font-weight:normal;">View</div>
<div class="a t" style="left:74.2px;top:16px;height:12px;line-height:12px;font-size:7.5px;color:#3c3c3c;font-weight:normal;">Insert</div>
<div class="a t" style="left:102.5px;top:16px;height:12px;line-height:12px;font-size:7.5px;color:#3c3c3c;font-weight:normal;">Format</div>
<div class="a t" style="left:135.5px;top:16px;height:12px;line-height:12px;font-size:7.5px;color:#3c3c3c;font-weight:normal;">Sheet</div>
<div class="a t" style="left:163.2px;top:16px;height:12px;line-height:12px;font-size:7.5px;color:#3c3c3c;font-weight:normal;">Data</div>
<div class="a t" style="left:188px;top:16px;height:12px;line-height:12px;font-size:7.5px;color:#3c3c3c;font-weight:normal;">Tools</div>
<div class="a t" style="left:214.3px;top:16px;height:12px;line-height:12px;font-size:7.5px;color:#3c3c3c;font-weight:normal;">Window</div>
<div class="a t" style="left:250.6px;top:16px;height:12px;line-height:12px;font-size:7.5px;color:#3c3c3c;font-weight:normal;">Help</div>
<svg class="a" style="left:10.3px;top:31.3px" width="12" height="12" viewBox="0 0 12 12"><path d="M2.5 1.5h5l2 2v7h-7z" fill="#eef6e0" stroke="#78a040" stroke-width="1"/><path d="M4 4h3M4 6h3M4 8h3" stroke="#a0c070" stroke-width=".8"/><circle cx="9.3" cy="9.8" r="1.8" fill="#5fae3a"/></svg>
<svg class="a" style="left:34.5px;top:31.3px" width="12" height="12" viewBox="0 0 12 12"><path d="M1 3h4l1 1h5v6.5H1z" fill="#7fb0d6"/><path d="M1 5h10v5.5H1z" fill="#a6cbe8"/><path d="M1 10.5h10" stroke="#5a8fb8" stroke-width=".8"/></svg>
<svg class="a" style="left:58.7px;top:31.3px" width="12" height="12" viewBox="0 0 12 12"><path d="M3 1.5h6v9H3z" fill="#f4f6f8" stroke="#b8c4d0" stroke-width=".7"/><path d="M6 3v4.5M4.2 5.8L6 7.8l1.8-2" stroke="#3a7cc4" stroke-width="1.4" fill="none"/></svg>
<svg class="a" style="left:85.2px;top:31.3px" width="12" height="12" viewBox="0 0 12 12"><rect x="1.5" y="1.5" width="9" height="9" fill="#d8382e"/><path d="M8.5 3L4 6l4.5 3" stroke="#fff" stroke-width="1" fill="none"/><path d="M8.5 3v6" stroke="#fff" stroke-width=".8"/></svg>
<svg class="a" style="left:102.2px;top:31.3px" width="12" height="12" viewBox="0 0 12 12"><rect x="3.5" y="1.5" width="5" height="4" fill="#fff" stroke="#999" stroke-width=".5"/><rect x="1" y="5" width="10" height="3.5" rx=".5" fill="#555"/><rect x="2.5" y="8" width="7" height="2.5" fill="#f4f4f4" stroke="#888" stroke-width=".5"/><circle cx="6" cy="3.2" r=".8" fill="#d33"/></svg>
<svg class="a" style="left:116.7px;top:31.3px" width="12" height="12" viewBox="0 0 12 12"><rect x="1" y="5" width="10" height="3.5" rx=".5" fill="#555"/><rect x="2.5" y="8" width="7" height="2.5" fill="#f4f4f4" stroke="#888" stroke-width=".5"/><circle cx="6" cy="3.5" r="2.5" fill="#fff" stroke="#444" stroke-width="1"/></svg>
<svg class="a" style="left:136px;top:31.3px" width="12" height="12" viewBox="0 0 12 12"><path d="M4.5 6.5L7.5 2M7.5 6.5L4.5 2" stroke="#c8c8c8" stroke-width=".8"/><ellipse cx="6" cy="8.5" rx="4.5" ry="2.5" fill="#c03434"/><circle cx="4" cy="8.5" r="1" fill="#e8a0a0"/><circle cx="8" cy="8.5" r="1" fill="#e8a0a0"/></svg>
<svg class="a" style="left:151.7px;top:31.3px" width="12" height="12" viewBox="0 0 12 12"><rect x="2" y="1.5" width="6" height="7" fill="#f2f0e0" stroke="#c9c08a" stroke-width=".6"/><rect x="4.5" y="4" width="6" height="7" fill="#fffbe8" stroke="#c9b870" stroke-width=".6"/><path d="M6 6l3 1.5-3 1.5z" fill="#8bc34a"/></svg>
<svg class="a" style="left:167.5px;top:31.3px" width="12" height="12" viewBox="0 0 12 12"><rect x="2" y="2" width="8" height="9" rx=".5" fill="#d9b46a"/><rect x="4" y="1" width="4" height="2" fill="#8c6f3a"/><rect x="5" y="5" width="5" height="6" fill="#fff" stroke="#bbb" stroke-width=".5"/></svg>
<svg class="a" style="left:192.8px;top:31.3px" width="12" height="12" viewBox="0 0 12 12"><path d="M5 1.5h2v4H5z" fill="#d9a050"/><path d="M3.5 5.5h5l1 3h-7z" fill="#b55a30"/><path d="M1.5 9h9v1.5h-9z" fill="#d64545"/></svg>
<svg class="a" style="left:217.9px;top:31.3px" width="12" height="12" viewBox="0 0 12 12"><path d="M2.5 7 C3.5 4 7 3 9.5 6" stroke="#c4c4c4" stroke-width="1.5" fill="none"/><path d="M1.5 4.5l1.2 3.5 3-1.5" fill="#c4c4c4"/></svg>
<svg class="a" style="left:236px;top:31.3px" width="12" height="12" viewBox="0 0 12 12"><path d="M9.5 7 C8.5 4 5 3 2.5 6" stroke="#c4c4c4" stroke-width="1.5" fill="none"/><path d="M10.5 4.5l-1.2 3.5-3-1.5" fill="#c4c4c4"/></svg>
<svg class="a" style="left:262.6px;top:31.3px" width="12" height="12" viewBox="0 0 12 12"><circle cx="4.5" cy="4.5" r="2.8" fill="#f4f4f4" stroke="#333" stroke-width="1.2"/><path d="M6.5 6.5l4 4" stroke="#333" stroke-width="1.8"/><path d="M6 9l2 2" stroke="#555" stroke-width="1"/></svg>
<svg class="a" style="left:278.3px;top:31.3px" width="12" height="12" viewBox="0 0 12 12"><text x="6" y="4.5" font-size="4" font-family="Liberation Sans" font-weight="bold" text-anchor="middle" fill="#333">ABC</text><path d="M3 7l2.5 2.5L9.5 5" stroke="#8cc04a" stroke-width="1.6" fill="none"/></svg>
<svg class="a" style="left:298.9px;top:31.3px" width="12" height="12" viewBox="0 0 12 12"><rect x="1" y="1.5" width="10" height="9" fill="#f8f8f8" stroke="#7a9a9a" stroke-width=".5"/><rect x="1" y="1.5" width="10" height="2.2" fill="#60c040"/><path d="M1 5.8h10M1 8.2h10M3.5 1.5v9M6 1.5v9M8.5 1.5v9" stroke="#a8c8d8" stroke-width=".6"/></svg>
<svg class="a" style="left:314.6px;top:31.3px" width="12" height="12" viewBox="0 0 12 12"><rect x="1" y="1" width="10" height="10" fill="#f8f8f8" stroke="#7a9a9a" stroke-width=".5"/><rect x="1" y="1" width="2.5" height="10" fill="#48b830"/><path d="M6 1v10M8.5 1v10M1 3.5h10M1 6h10M1 8.5h10" stroke="#a8c8d8" stroke-width=".6"/></svg>
<svg class="a" style="left:330.3px;top:31.3px" width="12" height="12" viewBox="0 0 12 12"><rect x="1" y="1" width="9" height="9" fill="#f4f4f4" stroke="#999" stroke-width=".6"/><rect x="1" y="4" width="9" height="2.5" fill="#e8b0b0"/><rect x="6.5" y="7" width="5" height="5" rx="1" fill="#d03030"/><path d="M7.7 8.2l2.6 2.6M10.3 8.2l-2.6 2.6" stroke="#fff" stroke-width=".8"/></svg>
<svg class="a" style="left:347.2px;top:31.3px" width="12" height="12" viewBox="0 0 12 12"><rect x="1" y="1" width="9" height="9" fill="#f4f4f4" stroke="#999" stroke-width=".6"/><rect x="3.5" y="1" width="2.5" height="9" fill="#e8b0b0"/><rect x="6.5" y="7" width="5" height="5" rx="1" fill="#d03030"/><path d="M7.7 8.2l2.6 2.6M10.3 8.2l-2.6 2.6" stroke="#fff" stroke-width=".8"/></svg>
<svg class="a" style="left:365.4px;top:31.3px" width="12" height="12" viewBox="0 0 12 12"><g fill="#333"><rect x="1.5" y="3" width="1.2" height="1.2"/><rect x="1.5" y="5.5" width="1.2" height="1.2"/><rect x="1.5" y="8" width="1.2" height="1.2"/></g><path d="M4.5 4.5h5M7 4.5v3.5" stroke="#222" stroke-width="1.3"/><path d="M4.3 7.2h5.4L7 10z" fill="#222"/></svg>
<svg class="a" style="left:381.2px;top:31.3px" width="12" height="12" viewBox="0 0 12 12"><g fill="#333"><rect x="1.5" y="3" width="1.2" height="1.2"/><rect x="1.5" y="5.5" width="1.2" height="1.2"/><rect x="1.5" y="8" width="1.2" height="1.2"/></g><path d="M7 3v4" stroke="#222" stroke-width="1.5"/><path d="M4.3 6.5h5.4L7 9.8z" fill="#222"/></svg>
<svg class="a" style="left:396.6px;top:31.3px" width="12" height="12" viewBox="0 0 12 12"><g fill="#333"><rect x="1.5" y="3" width="1.2" height="1.2"/><rect x="1.5" y="5.5" width="1.2" height="1.2"/><rect x="1.5" y="8" width="1.2" height="1.2"/></g><path d="M7 9.5v-4" stroke="#222" stroke-width="1.5"/><path d="M4.3 6h5.4L7 2.7z" fill="#222"/></svg>
<svg class="a" style="left:413.5px;top:31.3px" width="12" height="12" viewBox="0 0 12 12"><rect x="1" y="1.5" width="9" height="9" fill="#dfe6a0" stroke="#c8c8e0" stroke-width=".6"/><path d="M2 3h7L6 6z" fill="#e0e040"/><path d="M5 4.5l5 6" stroke="#111" stroke-width="1.3"/></svg>
<svg class="a" style="left:432px;top:31.3px" width="12" height="12" viewBox="0 0 12 12"><rect x="1" y="2" width="10" height="8" fill="#4a9ad8"/><path d="M1 7l3-2 3 2 4-1v4H1z" fill="#e0a040"/><rect x="1" y="2" width="10" height="8" fill="none" stroke="#8aa" stroke-width=".5"/></svg>
<svg class="a" style="left:448.2px;top:31.3px" width="12" height="12" viewBox="0 0 12 12"><circle cx="6" cy="6" r="4.7" fill="#d92828"/><path d="M6 6l4.2 2.2A4.7 4.7 0 0 1 7 10.6z" fill="#3c8fd0"/><path d="M6 6l1 4.6A4.7 4.7 0 0 1 3.5 10z" fill="#5ab046"/></svg>
<svg class="a" style="left:462.8px;top:31.3px" width="12" height="12" viewBox="0 0 12 12"><rect x="1.5" y="1.5" width="9" height="9" fill="none" stroke="#888" stroke-width=".9" stroke-dasharray="1.5 1"/><path d="M1.5 4h9M4 1.5v9" stroke="#aaa" stroke-width=".6" stroke-dasharray="1 1"/><path d="M7 9.5h2.5V7" stroke="#444" stroke-width=".9" fill="none"/></svg>
<svg class="a" style="left:482.8px;top:31.3px" width="12" height="12" viewBox="0 0 12 12"><text x="6" y="10.3" font-size="11.5" font-family="Liberation Sans" text-anchor="middle" fill="#222" stroke="#222" stroke-width=".35">&#937;</text></svg>
<svg class="a" style="left:502.8px;top:31.3px" width="12" height="12" viewBox="0 0 12 12"><path d="M3.5 4l2 2-2 2zM6.5 4l2 2-2 2z" fill="#222"/></svg>
<div class="a" style="left:27.4px;top:36.3px;width:2px;height:2px;background:#333;"></div>
<div class="a" style="left:51.6px;top:36.3px;width:2px;height:2px;background:#333;"></div>
<div class="a" style="left:74.5px;top:36.3px;width:2px;height:2px;background:#333;"></div>
<div class="a" style="left:184.5px;top:36.3px;width:2px;height:2px;background:#333;"></div>
<div class="a" style="left:229px;top:36.3px;width:2px;height:2px;background:#c0c0c0;"></div>
<div class="a" style="left:252px;top:36.3px;width:2px;height:2px;background:#c0c0c0;"></div>
<div class="a" style="left:9.6px;top:50.7px;width:67.4px;height:12.3px;background:#fff;border:1px solid #c6c6c6;"></div>
<div class="a t" style="left:12.6px;top:52px;height:12px;line-height:12px;font-size:7.4px;color:#333;font-weight:normal;">Liberation Sans</div>
<div class="a" style="left:77px;top:50.7px;width:8.5px;height:12.3px;background:linear-gradient(#e2e2e2,#d2d2d2);border:1px solid #c0c0c0;"></div>
<div class="a" style="left:91px;top:50.7px;width:23.5px;height:12.3px;background:#fff;border:1px solid #c6c6c6;"></div>
<div class="a t" style="left:94px;top:52px;height:12px;line-height:12px;font-size:7.4px;color:#333;font-weight:normal;">10</div>
<div class="a" style="left:114.5px;top:50.7px;width:8px;height:12.3px;background:linear-gradient(#e2e2e2,#d2d2d2);border:1px solid #c0c0c0;"></div>
<svg class="a" style="left:79.2px;top:56.2px" width="4" height="3" viewBox="0 0 4 3"><path d="M0 0h4L2 2.5z" fill="#666"/></svg>
<svg class="a" style="left:116.5px;top:56.2px" width="4" height="3" viewBox="0 0 4 3"><path d="M0 0h4L2 2.5z" fill="#666"/></svg>
<svg class="a" style="left:128.8px;top:50.4px" width="12" height="12" viewBox="0 0 12 12"><text x="6" y="10.6" font-size="12" font-family="Liberation Sans" font-weight="bold" text-anchor="middle" fill="#1e1e1e" stroke="#1e1e1e" stroke-width=".6">A</text></svg>
<svg class="a" style="left:144.5px;top:50.4px" width="12" height="12" viewBox="0 0 12 12"><text x="6" y="10.6" font-size="12" font-family="Liberation Sans" font-weight="bold" font-style="italic" text-anchor="middle" fill="#1e1e1e" stroke="#1e1e1e" stroke-width=".4">A</text></svg>
<svg class="a" style="left:160.2px;top:50.4px" width="12" height="12" viewBox="0 0 12 12"><text x="6" y="9.4" font-size="10.5" font-family="Liberation Sans" font-weight="bold" text-anchor="middle" fill="#1e1e1e" stroke="#1e1e1e" stroke-width=".4">A</text><path d="M1.5 11h9" stroke="#1e1e1e" stroke-width="1.2"/></svg>
<svg class="a" style="left:178.3px;top:50.4px" width="12" height="12" viewBox="0 0 12 12"><text x="6" y="9" font-size="10" font-family="Liberation Sans" font-weight="bold" text-anchor="middle" fill="#1a4a4a">A</text><rect x="1" y="9" width="10" height="2.5" fill="#8a1010"/></svg>
<svg class="a" style="left:202.5px;top:50.4px" width="12" height="12" viewBox="0 0 12 12"><path d="M8 1l2.2 1.5-3.5 5.5-2.5-1.5z" fill="#e8d890"/><path d="M8.2 1.3l1.5 1-.8 1.3-1.5-1z" fill="#f0a0b0"/><path d="M4.2 6.5l2.5 1.5-1.2 1.5-2-1z" fill="#d8c060"/><rect x=".5" y="9" width="11" height="2.8" fill="#f4f020"/></svg>
<svg class="a" style="left:230px;top:50.4px" width="12" height="12" viewBox="0 0 12 12"><path d="M1.5 3.5h9M1.5 5.5h6M1.5 7.5h9M1.5 9.5h6" stroke="#4a4a4a" stroke-width="1"/></svg>
<svg class="a" style="left:245.7px;top:50.4px" width="12" height="12" viewBox="0 0 12 12"><path d="M1.5 3.5h9M3 5.5h6M1.5 7.5h9M3 9.5h6" stroke="#4a4a4a" stroke-width="1"/></svg>
<svg class="a" style="left:261.4px;top:50.4px" width="12" height="12" viewBox="0 0 12 12"><path d="M1.5 3.5h9M4.5 5.5h6M1.5 7.5h9M4.5 9.5h6" stroke="#4a4a4a" stroke-width="1"/></svg>
<svg class="a" style="left:279.5px;top:50.4px" width="12" height="12" viewBox="0 0 12 12"><path d="M1.5 3h9M1.5 5.5h7M1.5 8h4" stroke="#444" stroke-width="1"/><path d="M8.5 5.5h1.5v3H7" stroke="#444" stroke-width=".8" fill="none"/></svg>
<svg class="a" style="left:296.5px;top:50.4px" width="12" height="12" viewBox="0 0 12 12"><rect x="1.5" y="2" width="9" height="8" fill="none" stroke="#c4c4c4" stroke-width=".8"/><path d="M6 2v8M1.5 6h9" stroke="#cfcfcf" stroke-width=".6"/></svg>
<svg class="a" style="left:315.8px;top:50.4px" width="12" height="12" viewBox="0 0 12 12"><rect x="2" y="1" width="8" height="10" fill="#fafafa" stroke="#bbb" stroke-width=".5"/><rect x="2" y="1" width="8" height="2" fill="#e89040"/><path d="M6 3v5" stroke="#e89040" stroke-width="1.2"/></svg>
<svg class="a" style="left:331.5px;top:50.4px" width="12" height="12" viewBox="0 0 12 12"><rect x="2" y="1" width="8" height="10" fill="#fafafa" stroke="#bbb" stroke-width=".5"/><path d="M.5 6h11" stroke="#e89040" stroke-width="1.4"/></svg>
<svg class="a" style="left:347.2px;top:50.4px" width="12" height="12" viewBox="0 0 12 12"><rect x="2" y="1" width="8" height="10" fill="#fafafa" stroke="#bbb" stroke-width=".5"/><rect x="1" y="9" width="10" height="2" fill="#e89040"/><path d="M6 3v6" stroke="#999" stroke-width="1.2"/></svg>
<svg class="a" style="left:366.6px;top:50.4px" width="12" height="12" viewBox="0 0 12 12"><text x="6" y="10.2" font-size="10.5" font-family="Liberation Sans" font-weight="bold" text-anchor="middle" fill="#222" stroke="#222" stroke-width=".3">$</text></svg>
<svg class="a" style="left:382.8px;top:50.4px" width="12" height="12" viewBox="0 0 12 12"><text x="6" y="10.2" font-size="10.5" font-family="Liberation Sans" font-weight="bold" text-anchor="middle" fill="#222" stroke="#222" stroke-width=".3">%</text></svg>
<svg class="a" style="left:398px;top:50.4px" width="12" height="12" viewBox="0 0 12 12"><text x="6" y="8.5" font-size="5.5" font-family="Liberation Sans" text-anchor="middle" fill="#333">0.12</text></svg>
<svg class="a" style="left:413.5px;top:50.4px" width="12" height="12" viewBox="0 0 12 12"><rect x="1" y="2" width="10" height="8.5" fill="#f2f2f2" stroke="#aaa" stroke-width=".6"/><rect x="1" y="2" width="10" height="2" fill="#7ec050"/></svg>
<svg class="a" style="left:433.5px;top:50.4px" width="12" height="12" viewBox="0 0 12 12"><text x="6" y="8" font-size="5.5" font-family="Liberation Sans" text-anchor="middle" fill="#333">0.00</text><circle cx="7.5" cy="9" r="1.6" fill="#8cc04a"/></svg>
<svg class="a" style="left:449px;top:50.4px" width="12" height="12" viewBox="0 0 12 12"><text x="5.5" y="8" font-size="5.5" font-family="Liberation Sans" text-anchor="middle" fill="#333">0.00</text><rect x="6.5" y="7.5" width="3.5" height="3.5" fill="#d03030"/></svg>
<svg class="a" style="left:468px;top:50.4px" width="12" height="12" viewBox="0 0 12 12"><path d="M4 2.5h7M6 4.5h5M6 6.5h5M6 8.5h5M4 10.5h7" stroke="#555" stroke-width=".8" fill="none"/><path d="M1.5 5l2 1.5-2 1.5z" fill="#333"/></svg>
<svg class="a" style="left:485px;top:50.4px" width="12" height="12" viewBox="0 0 12 12"><path d="M4 2.5h7M6 4.5h5M6 6.5h5M6 8.5h5M4 10.5h7" stroke="#555" stroke-width=".8" fill="none"/><path d="M1.5 5l2 1.5-2 1.5z" fill="#333"/></svg>
<svg class="a" style="left:502.8px;top:50.4px" width="12" height="12" viewBox="0 0 12 12"><path d="M3.5 4l2 2-2 2zM6.5 4l2 2-2 2z" fill="#222"/></svg>
<div class="a" style="left:196.6px;top:55.4px;width:2px;height:2px;background:#333;"></div>
<div class="a" style="left:219.5px;top:55.4px;width:2px;height:2px;background:#333;"></div>
<div class="a" style="left:4px;top:69px;width:69px;height:11.5px;background:#fff;border:1px solid #c6c6c6;"></div>
<div class="a t" style="left:6px;top:69.6px;height:12px;line-height:12px;font-size:7.4px;color:#333;font-weight:normal;">A1</div>
<div class="a" style="left:73px;top:69px;width:8.5px;height:11.5px;background:linear-gradient(#e2e2e2,#d2d2d2);border:1px solid #c0c0c0;"></div>
<svg class="a" style="left:75.2px;top:74.6px" width="4" height="3" viewBox="0 0 4 3"><path d="M0 0h4L2 2.5z" fill="#666"/></svg>
<svg class="a" style="left:87.4px;top:68.6px" width="12" height="12" viewBox="0 0 12 12"><text x="1.5" y="9.8" font-size="10.5" font-family="Liberation Serif" font-style="italic" font-weight="bold" fill="#1a1a1a">f</text><text x="6" y="9.2" font-size="5" font-family="Liberation Sans" font-weight="bold" fill="#333">(x)</text></svg>
<svg class="a" style="left:102.6px;top:69.2px" width="12" height="12" viewBox="0 0 12 12"><text x="6" y="10" font-size="10.5" font-family="Liberation Sans" font-weight="bold" text-anchor="middle" fill="#1a1a1a" stroke="#1a1a1a" stroke-width=".3">&#931;</text></svg>
<svg class="a" style="left:118.7px;top:68.8px" width="12" height="12" viewBox="0 0 12 12"><path d="M2.3 4.7h7.4M2.3 7.3h7.4" stroke="#1a1a1a" stroke-width="1.3"/></svg>
<div class="a" style="left:137.6px;top:69px;width:342.4px;height:11.5px;background:#fff;border:1px solid #c6c6c6;"></div>
<div class="a" style="left:480px;top:69px;width:9.5px;height:13px;background:linear-gradient(#e2e2e2,#d2d2d2);border:1px solid #c0c0c0;"></div>
<svg class="a" style="left:482.7px;top:74.6px" width="4" height="3" viewBox="0 0 4 3"><path d="M0 0h4L2 2.5z" fill="#444"/></svg>
<div class="a" style="left:1.5px;top:83px;width:482.5px;height:270px;background:#fff;"></div>
<div class="a" style="left:1.5px;top:83px;width:482.5px;height:11.4px;background:linear-gradient(#e6e6e6,#d2d2d2);border-top:1px solid #c0c0c0;"></div>
<div class="a" style="left:1.5px;top:94.4px;width:19.5px;height:258.6px;background:linear-gradient(90deg,#dedede,#cfcfcf);"></div>
<svg class="a" style="left:1.5px;top:83px" width="483" height="271" viewBox="0 0 483 271"><path d="M58.4 11.4V270" stroke="#c9c9c9" stroke-width="1"/><path d="M58.4 0V11.4" stroke="#b4b4b4" stroke-width="1"/><path d="M97.3 11.4V270" stroke="#c9c9c9" stroke-width="1"/><path d="M97.3 0V11.4" stroke="#b4b4b4" stroke-width="1"/><path d="M136.2 11.4V270" stroke="#c9c9c9" stroke-width="1"/><path d="M136.2 0V11.4" stroke="#b4b4b4" stroke-width="1"/><path d="M175.1 11.4V270" stroke="#c9c9c9" stroke-width="1"/><path d="M175.1 0V11.4" stroke="#b4b4b4" stroke-width="1"/><path d="M214 11.4V270" stroke="#c9c9c9" stroke-width="1"/><path d="M214 0V11.4" stroke="#b4b4b4" stroke-width="1"/><path d="M252.9 11.4V270" stroke="#c9c9c9" stroke-width="1"/><path d="M252.9 0V11.4" stroke="#b4b4b4" stroke-width="1"/><path d="M291.8 11.4V270" stroke="#c9c9c9" stroke-width="1"/><path d="M291.8 0V11.4" stroke="#b4b4b4" stroke-width="1"/><path d="M330.7 11.4V270" stroke="#c9c9c9" stroke-width="1"/><path d="M330.7 0V11.4" stroke="#b4b4b4" stroke-width="1"/><path d="M369.6 11.4V270" stroke="#c9c9c9" stroke-width="1"/><path d="M369.6 0V11.4" stroke="#b4b4b4" stroke-width="1"/><path d="M408.5 11.4V270" stroke="#c9c9c9" stroke-width="1"/><path d="M408.5 0V11.4" stroke="#b4b4b4" stroke-width="1"/><path d="M447.4 11.4V270" stroke="#c9c9c9" stroke-width="1"/><path d="M447.4 0V11.4" stroke="#b4b4b4" stroke-width="1"/><path d="M19.5 19.52H483" stroke="#c9c9c9" stroke-width="1"/><path d="M0 19.52H19.5" stroke="#b4b4b4" stroke-width="1"/><path d="M19.5 27.64H483" stroke="#c9c9c9" stroke-width="1"/><path d="M0 27.64H19.5" stroke="#b4b4b4" stroke-width="1"/><path d="M19.5 35.76H483" stroke="#c9c9c9" stroke-width="1"/><path d="M0 35.76H19.5" stroke="#b4b4b4" stroke-width="1"/><path d="M19.5 43.88H483" stroke="#c9c9c9" stroke-width="1"/><path d="M0 43.88H19.5" stroke="#b4b4b4" stroke-width="1"/><path d="M19.5 52H483" stroke="#c9c9c9" stroke-width="1"/><path d="M0 52H19.5" stroke="#b4b4b4" stroke-width="1"/><path d="M19.5 60.12H483" stroke="#c9c9c9" stroke-width="1"/><path d="M0 60.12H19.5" stroke="#b4b4b4" stroke-width="1"/><path d="M19.5 68.24H483" stroke="#c9c9c9" stroke-width="1"/><path d="M0 68.24H19.5" stroke="#b4b4b4" stroke-width="1"/><path d="M19.5 76.36H483" stroke="#c9c9c9" stroke-width="1"/><path d="M0 76.36H19.5" stroke="#b4b4b4" stroke-width="1"/><path d="M19.5 84.48H483" stroke="#c9c9c9" stroke-width="1"/><path d="M0 84.48H19.5" stroke="#b4b4b4" stroke-width="1"/><path d="M19.5 92.6H483" stroke="#c9c9c9" stroke-width="1"/><path d="M0 92.6H19.5" stroke="#b4b4b4" stroke-width="1"/><path d="M19.5 100.72H483" stroke="#c9c9c9" stroke-width="1"/><path d="M0 100.72H19.5" stroke="#b4b4b4" stroke-width="1"/><path d="M19.5 108.84H483" stroke="#c9c9c9" stroke-width="1"/><path d="M0 108.84H19.5" stroke="#b4b4b4" stroke-width="1"/><path d="M19.5 116.96H483" stroke="#c9c9c9" stroke-width="1"/><path d="M0 116.96H19.5" stroke="#b4b4b4" stroke-width="1"/><path d="M19.5 125.08H483" stroke="#c9c9c9" stroke-width="1"/><path d="M0 125.08H19.5" stroke="#b4b4b4" stroke-width="1"/><path d="M19.5 133.2H483" stroke="#c9c9c9" stroke-width="1"/><path d="M0 133.2H19.5" stroke="#b4b4b4" stroke-width="1"/><path d="M19.5 141.32H483" stroke="#c9c9c9" stroke-width="1"/><path d="M0 141.32H19.5" stroke="#b4b4b4" stroke-width="1"/><path d="M19.5 149.44H483" stroke="#c9c9c9" stroke-width="1"/><path d="M0 149.44H19.5" stroke="#b4b4b4" stroke-width="1"/><path d="M19.5 157.56H483" stroke="#c9c9c9" stroke-width="1"/><path d="M0 157.56H19.5" stroke="#b4b4b4" stroke-width="1"/><path d="M19.5 165.68H483" stroke="#c9c9c9" stroke-width="1"/><path d="M0 165.68H19.5" stroke="#b4b4b4" stroke-width="1"/><path d="M19.5 173.8H483" stroke="#c9c9c9" stroke-width="1"/><path d="M0 173.8H19.5" stroke="#b4b4b4" stroke-width="1"/><path d="M19.5 181.92H483" stroke="#c9c9c9" stroke-width="1"/><path d="M0 181.92H19.5" stroke="#b4b4b4" stroke-width="1"/><path d="M19.5 190.04H483" stroke="#c9c9c9" stroke-width="1"/><path d="M0 190.04H19.5" stroke="#b4b4b4" stroke-width="1"/><path d="M19.5 198.16H483" stroke="#c9c9c9" stroke-width="1"/><path d="M0 198.16H19.5" stroke="#b4b4b4" stroke-width="1"/><path d="M19.5 206.28H483" stroke="#c9c9c9" stroke-width="1"/><path d="M0 206.28H19.5" stroke="#b4b4b4" stroke-width="1"/><path d="M19.5 214.4H483" stroke="#c9c9c9" stroke-width="1"/><path d="M0 214.4H19.5" stroke="#b4b4b4" stroke-width="1"/><path d="M19.5 222.52H483" stroke="#c9c9c9" stroke-width="1"/><path d="M0 222.52H19.5" stroke="#b4b4b4" stroke-width="1"/><path d="M19.5 230.64H483" stroke="#c9c9c9" stroke-width="1"/><path d="M0 230.64H19.5" stroke="#b4b4b4" stroke-width="1"/><path d="M19.5 238.76H483" stroke="#c9c9c9" stroke-width="1"/><path d="M0 238.76H19.5" stroke="#b4b4b4" stroke-width="1"/><path d="M19.5 246.88H483" stroke="#c9c9c9" stroke-width="1"/><path d="M0 246.88H19.5" stroke="#b4b4b4" stroke-width="1"/><path d="M19.5 255H483" stroke="#c9c9c9" stroke-width="1"/><path d="M0 255H19.5" stroke="#b4b4b4" stroke-width="1"/><path d="M19.5 263.12H483" stroke="#c9c9c9" stroke-width="1"/><path d="M0 263.12H19.5" stroke="#b4b4b4" stroke-width="1"/><path d="M0 11.4H483" stroke="#a8a8a8" stroke-width="1"/><path d="M19.5 0V270" stroke="#b0b0b0" stroke-width="1"/></svg>
<div class="a" style="left:21px;top:83px;width:38.9px;height:10.9px;background:linear-gradient(#5ea4ec 0,#5ea4ec 50%,#2f7dd6 50%,#2f7dd6 100%);"></div>
<div class="a" style="left:1.5px;top:94.9px;width:19px;height:7.62px;background:#3a86dc;"></div>
<div class="a t" style="left:-59.05px;width:200px;text-align:center;top:83.4px;height:12px;line-height:12px;font-size:7.8px;color:#f4f8ff;font-weight:bold;">A</div>
<div class="a t" style="left:-20.15px;width:200px;text-align:center;top:83.4px;height:12px;line-height:12px;font-size:7.8px;color:#4a4a4a;font-weight:normal;">B</div>
<div class="a t" style="left:18.75px;width:200px;text-align:center;top:83.4px;height:12px;line-height:12px;font-size:7.8px;color:#4a4a4a;font-weight:normal;">C</div>
<div class="a t" style="left:57.65px;width:200px;text-align:center;top:83.4px;height:12px;line-height:12px;font-size:7.8px;color:#4a4a4a;font-weight:normal;">D</div>
<div class="a t" style="left:96.55px;width:200px;text-align:center;top:83.4px;height:12px;line-height:12px;font-size:7.8px;color:#4a4a4a;font-weight:normal;">E</div>
<div class="a t" style="left:135.45px;width:200px;text-align:center;top:83.4px;height:12px;line-height:12px;font-size:7.8px;color:#4a4a4a;font-weight:normal;">F</div>
<div class="a t" style="left:174.35px;width:200px;text-align:center;top:83.4px;height:12px;line-height:12px;font-size:7.8px;color:#4a4a4a;font-weight:normal;">G</div>
<div class="a t" style="left:213.25px;width:200px;text-align:center;top:83.4px;height:12px;line-height:12px;font-size:7.8px;color:#4a4a4a;font-weight:normal;">H</div>
<div class="a t" style="left:252.15px;width:200px;text-align:center;top:83.4px;height:12px;line-height:12px;font-size:7.8px;color:#4a4a4a;font-weight:normal;">I</div>
<div class="a t" style="left:291.05px;width:200px;text-align:center;top:83.4px;height:12px;line-height:12px;font-size:7.8px;color:#4a4a4a;font-weight:normal;">J</div>
<div class="a t" style="left:329.95px;width:200px;text-align:center;top:83.4px;height:12px;line-height:12px;font-size:7.8px;color:#4a4a4a;font-weight:normal;">K</div>
<div class="a t" style="left:368.85px;width:200px;text-align:center;top:83.4px;height:12px;line-height:12px;font-size:7.8px;color:#4a4a4a;font-weight:normal;">L</div>
<div class="a t" style="left:-88.2px;width:200px;text-align:center;top:93.46px;height:12px;line-height:12px;font-size:8px;color:#cfe2f8;font-weight:normal;">1</div>
<div class="a t" style="left:-88.2px;width:200px;text-align:center;top:101.58px;height:12px;line-height:12px;font-size:8px;color:#444;font-weight:normal;">2</div>
<div class="a t" style="left:-88.2px;width:200px;text-align:center;top:109.7px;height:12px;line-height:12px;font-size:8px;color:#444;font-weight:normal;">3</div>
<div class="a t" style="left:-88.2px;width:200px;text-align:center;top:117.82px;height:12px;line-height:12px;font-size:8px;color:#444;font-weight:normal;">4</div>
<div class="a t" style="left:-88.2px;width:200px;text-align:center;top:125.94px;height:12px;line-height:12px;font-size:8px;color:#444;font-weight:normal;">5</div>
<div class="a t" style="left:-88.2px;width:200px;text-align:center;top:134.06px;height:12px;line-height:12px;font-size:8px;color:#444;font-weight:normal;">6</div>
<div class="a t" style="left:-88.2px;width:200px;text-align:center;top:142.18px;height:12px;line-height:12px;font-size:8px;color:#444;font-weight:normal;">7</div>
<div class="a t" style="left:-88.2px;width:200px;text-align:center;top:150.3px;height:12px;line-height:12px;font-size:8px;color:#444;font-weight:normal;">8</div>
<div class="a t" style="left:-88.2px;width:200px;text-align:center;top:158.42px;height:12px;line-height:12px;font-size:8px;color:#444;font-weight:normal;">9</div>
<div class="a t" style="left:-88.2px;width:200px;text-align:center;top:166.54px;height:12px;line-height:12px;font-size:8px;color:#444;font-weight:normal;">10</div>
<div class="a t" style="left:-88.2px;width:200px;text-align:center;top:174.66px;height:12px;line-height:12px;font-size:8px;color:#444;font-weight:normal;">11</div>
<div class="a t" style="left:-88.2px;width:200px;text-align:center;top:182.78px;height:12px;line-height:12px;font-size:8px;color:#444;font-weight:normal;">12</div>
<div class="a t" style="left:-88.2px;width:200px;text-align:center;top:190.9px;height:12px;line-height:12px;font-size:8px;color:#444;font-weight:normal;">13</div>
<div class="a t" style="left:-88.2px;width:200px;text-align:center;top:199.02px;height:12px;line-height:12px;font-size:8px;color:#444;font-weight:normal;">14</div>
<div class="a t" style="left:-88.2px;width:200px;text-align:center;top:207.14px;height:12px;line-height:12px;font-size:8px;color:#444;font-weight:normal;">15</div>
<div class="a t" style="left:-88.2px;width:200px;text-align:center;top:215.26px;height:12px;line-height:12px;font-size:8px;color:#444;font-weight:normal;">16</div>
<div class="a t" style="left:-88.2px;width:200px;text-align:center;top:223.38px;height:12px;line-height:12px;font-size:8px;color:#444;font-weight:normal;">17</div>
<div class="a t" style="left:-88.2px;width:200px;text-align:center;top:231.5px;height:12px;line-height:12px;font-size:8px;color:#444;font-weight:normal;">18</div>
<div class="a t" style="left:-88.2px;width:200px;text-align:center;top:239.62px;height:12px;line-height:12px;font-size:8px;color:#444;font-weight:normal;">19</div>
<div class="a t" style="left:-88.2px;width:200px;text-align:center;top:247.74px;height:12px;line-height:12px;font-size:8px;color:#444;font-weight:normal;">20</div>
<div class="a t" style="left:-88.2px;width:200px;text-align:center;top:255.86px;height:12px;line-height:12px;font-size:8px;color:#444;font-weight:normal;">21</div>
<div class="a t" style="left:-88.2px;width:200px;text-align:center;top:263.98px;height:12px;line-height:12px;font-size:8px;color:#444;font-weight:normal;">22</div>
<div class="a t" style="left:-88.2px;width:200px;text-align:center;top:272.1px;height:12px;line-height:12px;font-size:8px;color:#444;font-weight:normal;">23</div>
<div class="a t" style="left:-88.2px;width:200px;text-align:center;top:280.22px;height:12px;line-height:12px;font-size:8px;color:#444;font-weight:normal;">24</div>
<div class="a t" style="left:-88.2px;width:200px;text-align:center;top:288.34px;height:12px;line-height:12px;font-size:8px;color:#444;font-weight:normal;">25</div>
<div class="a t" style="left:-88.2px;width:200px;text-align:center;top:296.46px;height:12px;line-height:12px;font-size:8px;color:#444;font-weight:normal;">26</div>
<div class="a t" style="left:-88.2px;width:200px;text-align:center;top:304.58px;height:12px;line-height:12px;font-size:8px;color:#444;font-weight:normal;">27</div>
<div class="a t" style="left:-88.2px;width:200px;text-align:center;top:312.7px;height:12px;line-height:12px;font-size:8px;color:#444;font-weight:normal;">28</div>
<div class="a t" style="left:-88.2px;width:200px;text-align:center;top:320.82px;height:12px;line-height:12px;font-size:8px;color:#444;font-weight:normal;">29</div>
<div class="a t" style="left:-88.2px;width:200px;text-align:center;top:328.94px;height:12px;line-height:12px;font-size:8px;color:#444;font-weight:normal;">30</div>
<div class="a t" style="left:-88.2px;width:200px;text-align:center;top:337.06px;height:12px;line-height:12px;font-size:8px;color:#444;font-weight:normal;">31</div>
<div class="a" style="left:20.8px;top:94.4px;width:1px;height:8.4px;background:#333;"></div>
<div class="a" style="left:20.8px;top:101.7px;width:40px;height:1.5px;background:#111;"></div>
<div class="a" style="left:59.1px;top:94.4px;width:1.7px;height:8.8px;background:#111;"></div>
<div class="a" style="left:59.3px;top:101.8px;width:2.5px;height:2.4px;background:#111;border-radius:1px;"></div>
<div class="a" style="left:484px;top:83px;width:7.5px;height:269.5px;background:#fafafa;"></div>
<div class="a" style="left:484px;top:83px;width:7.5px;height:2.5px;background:#666;"></div>
<div class="a" style="left:485.3px;top:86px;width:4.5px;height:129.5px;background:#fdfdfd;border:1px solid #c8c8c8;border-radius:2px;"></div>
<div class="a" style="left:491.3px;top:200.3px;width:2.3px;height:34.4px;background:#5a5a5a;"></div>
<div class="a" style="left:491.5px;top:67px;width:1px;height:302px;background:#bdbdbd;"></div>
<div class="a" style="left:492.5px;top:67px;width:1px;height:302px;background:#ececec;"></div>
<div class="a" style="left:493.5px;top:67px;width:2px;height:302px;background:#cfcfcf;"></div>
<div class="a" style="left:495.5px;top:67px;width:1px;height:302px;background:#ececec;"></div>
<div class="a" style="left:496.5px;top:67px;width:18.1px;height:302px;background:#d4d4d4;"></div>
<div class="a" style="left:491.3px;top:200.3px;width:2.3px;height:34.4px;background:#5a5a5a;"></div>
<svg class="a" style="left:499.7px;top:72.1px" width="9" height="9" viewBox="0 0 12 12"><path d="M3 3l6 6" stroke="#444" stroke-width="1"/><path d="M2.5 2.5h3l-3 3z" fill="#444"/></svg>
<svg class="a" style="left:498.7px;top:88.9px" width="11" height="11" viewBox="0 0 12 12"><circle cx="6" cy="6" r="4.3" fill="#fafafa" stroke="#c4c4c4" stroke-width="1.4" stroke-dasharray="1.6 1.1"/><circle cx="6" cy="6" r="3.2" fill="#f6f6f6"/><circle cx="6" cy="6" r="1.2" fill="#dedede"/></svg>
<svg class="a" style="left:498.7px;top:104.7px" width="11" height="11" viewBox="0 0 12 12"><rect x="1.5" y="1" width="9" height="10" fill="#f4ecd0" stroke="#d8d0b8" stroke-width=".5"/><path d="M4 2.5c2-1 4 0 4.5 2.5S8 9.5 6 9.8 3 8 3.5 6z" fill="#eab030"/><path d="M4 8.5c1 1.5 3 1.5 4.5 0" stroke="#b06020" stroke-width="1.2" fill="none"/></svg>
<svg class="a" style="left:498.7px;top:122.1px" width="11" height="11" viewBox="0 0 12 12"><rect x=".5" y="2.5" width="11" height="7" fill="#3a8ad0" stroke="#6aa0d0" stroke-width=".5"/><path d="M.5 7l3-1.5 3 1.5 5-1.5v4h-11z" fill="#e8a040"/><path d="M.5 10.8h11" stroke="#88c0f0" stroke-width=".8"/></svg>
<svg class="a" style="left:498.7px;top:136.9px" width="11" height="11" viewBox="0 0 12 12"><circle cx="6" cy="6" r="5.2" fill="#2f7fd8"/><circle cx="6" cy="6" r="4.2" fill="#4a94e4"/><path d="M8.3 3.5L5 7.5 4 8.3" stroke="#e8f2ff" stroke-width="1" fill="none"/></svg>
<svg class="a" style="left:498.7px;top:153.5px" width="11" height="11" viewBox="0 0 12 12"><text x="1.5" y="9.8" font-size="10.5" font-family="Liberation Serif" font-style="italic" font-weight="bold" fill="#1a1a1a">f</text><text x="6" y="9.2" font-size="5" font-family="Liberation Sans" font-weight="bold" fill="#333">(x)</text></svg>
<div class="a" style="left:1.5px;top:352.5px;width:482.5px;height:7.5px;background:#fafafa;"></div>
<div class="a" style="left:18px;top:353.8px;width:203px;height:4.8px;background:#dedede;border:1px solid #c4c4c4;border-radius:2px;"></div>
<div class="a" style="left:482.5px;top:353.5px;width:1.5px;height:6px;background:#444;"></div>
<div class="a" style="left:484px;top:352.5px;width:7.5px;height:7.5px;background:#d0d0d0;"></div>
<div class="a" style="left:1.5px;top:360px;width:490px;height:9.3px;background:#d0d0d0;border-bottom:1px solid #b8b8b8;"></div>
<div class="a" style="left:58px;top:359.5px;width:31.5px;height:9.8px;background:#fff;border-right:1px solid #b0b0b0;"></div>
<div class="a t" style="left:59px;top:358.5px;height:12px;line-height:12px;font-size:7px;color:#222;font-weight:bold;">Sheet1</div>
<div class="a" style="left:0px;top:369.3px;width:514.6px;height:12.7px;background:#d2d2d2;"></div>
<div class="a" style="left:93.3px;top:370.5px;width:1px;height:10px;background:#bdbdbd;"></div>
<div class="a" style="left:183px;top:370.5px;width:1px;height:10px;background:#bdbdbd;"></div>
<div class="a" style="left:265.5px;top:370.5px;width:1px;height:10px;background:#bdbdbd;"></div>
<div class="a" style="left:299px;top:370.5px;width:1px;height:10px;background:#bdbdbd;"></div>
<div class="a" style="left:326.8px;top:370.5px;width:1px;height:10px;background:#bdbdbd;"></div>
<div class="a" style="left:341.3px;top:370.5px;width:1px;height:10px;background:#bdbdbd;"></div>
<div class="a" style="left:421.8px;top:370.5px;width:1px;height:10px;background:#bdbdbd;"></div>
<div class="a" style="left:490.4px;top:370.5px;width:1px;height:10px;background:#bdbdbd;"></div>
<div class="a t" style="left:188px;top:369.5px;height:12px;line-height:12px;font-size:6.4px;color:#444;font-weight:normal;">Default</div>
<div class="a t" style="left:281.4px;width:200px;text-align:center;top:369.5px;height:12px;line-height:12px;font-size:6.4px;color:#444;font-weight:normal;">Sum=0</div>
<div class="a t" style="left:401.5px;width:200px;text-align:center;top:369.5px;height:12px;line-height:12px;font-size:6.2px;color:#444;font-weight:normal;">100%</div>
<svg class="a" style="left:302px;top:372px" width="8" height="7" viewBox="0 0 8 7"><path d="M1 1v5M3 3.5l3-2.5v5z" fill="#555" stroke="#555" stroke-width=".8"/></svg>
<div class="a" style="left:315px;top:371.5px;width:8px;height:8px;background:#d8d0f0;border:1px solid #b0a8d8;"></div>
<svg class="a" style="left:425px;top:372px" width="64" height="7" viewBox="0 0 64 7"><path d="M1 3.5h3M5 3.5h54M60 3.5h3M61.5 2v3" stroke="#888" stroke-width=".8"/><circle cx="31" cy="3.5" r="2" fill="#fff" stroke="#777" stroke-width=".7"/></svg>
<div class="a" style="left:513.6px;top:0px;width:1px;height:382px;background:#dde4ea;"></div>
<div class="a" style="left:0px;top:380.6px;width:514.6px;height:1px;background:#dde2e6;"></div></div>
<div id="mp" class="win" style="left:40px;top:293px;width:355px;height:211.5px;background:#d6d6d6;box-shadow:0 1px 3px rgba(0,0,0,.45);border-radius:3px 3px 0 0;"><div class="a" style="left:0px;top:0px;width:355px;height:25.4px;background:linear-gradient(#e4e4e4,#d6d6d6);"></div>
<div class="a" style="left:0px;top:0px;width:355px;height:1px;background:#bdbdbd;"></div>
<div class="a" style="left:320px;top:0px;width:35px;height:12.5px;background:#bcbcbc;border-radius:0 3px 0 5px;"></div>
<svg class="a" style="left:2.7px;top:3.4px" width="9.3" height="8.3" viewBox="0 0 9.3 8.3"><rect x=".5" y=".5" width="8.3" height="7.3" rx="1" fill="#f4f4f4" stroke="#999" stroke-width=".6"/><path d="M2.5 6l4-4" stroke="#222" stroke-width="1.3"/></svg>
<div class="a t" style="left:67px;width:200px;text-align:center;top:1.8px;height:12px;line-height:12px;font-size:8px;color:#3a3a3a;font-weight:bold;">(Untitled)</div>
<svg class="a" style="left:322px;top:3px" width="32" height="8" viewBox="0 0 32 8"><path d="M2.5 5.5h4" stroke="#e8e8e8" stroke-width="1.2"/><path d="M13 1.5v5M15 1.5v5" stroke="#e8e8e8" stroke-width="1"/><path d="M23.5 2l3.5 3.5M27 2l-3.5 3.5" stroke="#f0f0f0" stroke-width="1.3"/></svg>
<div class="a t" style="left:5px;top:13.8px;height:12px;line-height:12px;font-size:7.5px;color:#3c3c3c;font-weight:normal;">File</div>
<div class="a t" style="left:23.8px;top:13.8px;height:12px;line-height:12px;font-size:7.5px;color:#3c3c3c;font-weight:normal;">Edit</div>
<div class="a t" style="left:43.6px;top:13.8px;height:12px;line-height:12px;font-size:7.5px;color:#3c3c3c;font-weight:normal;">Search</div>
<div class="a t" style="left:73px;top:13.8px;height:12px;line-height:12px;font-size:7.5px;color:#3c3c3c;font-weight:normal;">Options</div>
<div class="a t" style="left:107px;top:13.8px;height:12px;line-height:12px;font-size:7.5px;color:#3c3c3c;font-weight:normal;">Help</div>
<div class="a" style="left:0px;top:25.4px;width:23px;height:186.1px;background:#d2d2d2;"></div>
<div class="a" style="left:23px;top:25.4px;width:332px;height:186.1px;background:#fcfcfc;"></div>
<div class="a t" style="left:-80.5px;width:200px;text-align:center;top:24px;height:12px;line-height:12px;font-size:6.5px;color:#aaa;font-weight:normal;">1</div>
<div class="a" style="left:24px;top:25.5px;width:1.2px;height:9.7px;background:#6a6a6a;"></div>
<div class="a" style="left:347.3px;top:27px;width:4.5px;height:182px;background:#ececec;border:1px solid #c4c4c4;border-radius:2px;"></div>
<div class="a" style="left:352.5px;top:25.4px;width:2.5px;height:186.1px;background:#d6d6d6;"></div></div>
<svg class="a" style="left:754.8px;top:63.5px" width="7" height="9" viewBox="0 0 9 13"><path d="M1 1v9.5l2.3-2.2 1.7 3.6 1.5-.7-1.7-3.5H8z" fill="#fff" stroke="#111" stroke-width="1.1"/></svg>
</div></body></html>
